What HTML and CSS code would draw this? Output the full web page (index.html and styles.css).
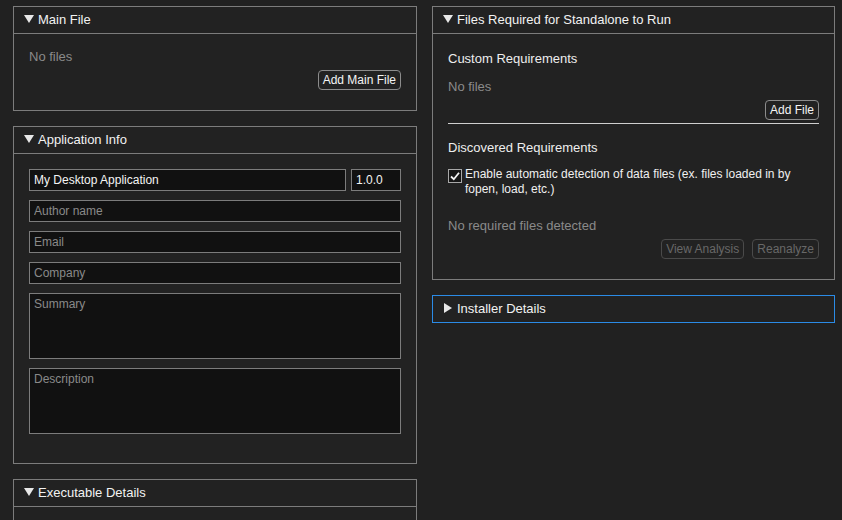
FILE: index.html
```html
<!DOCTYPE html>
<html>
<head>
<meta charset="utf-8">
<link rel="stylesheet" href="styles.css">
</head>
<body>
<div class="page">
  <div class="col">
    <section class="panel">
      <header class="panel-head">
        <svg class="tri" width="10" height="8" viewBox="0 0 10 8"><polygon points="0,0 10,0 5,8" fill="#e8e8e8"/></svg>
        <span>Main File</span>
      </header>
      <div class="panel-body main-body">
        <div class="muted">No files</div>
        <div class="btn-row"><button class="btn">Add Main File</button></div>
      </div>
    </section>

    <section class="panel">
      <header class="panel-head">
        <svg class="tri" width="10" height="8" viewBox="0 0 10 8"><polygon points="0,0 10,0 5,8" fill="#e8e8e8"/></svg>
        <span>Application Info</span>
      </header>
      <div class="panel-body info-body">
        <div class="name-row">
          <input class="field name" value="My Desktop Application">
          <input class="field ver" value="1.0.0">
        </div>
        <input class="field" placeholder="Author name">
        <input class="field" placeholder="Email">
        <input class="field" placeholder="Company">
        <textarea class="field area" placeholder="Summary"></textarea>
        <textarea class="field area" placeholder="Description"></textarea>
      </div>
    </section>

    <section class="panel">
      <header class="panel-head">
        <svg class="tri" width="10" height="8" viewBox="0 0 10 8"><polygon points="0,0 10,0 5,8" fill="#e8e8e8"/></svg>
        <span>Executable Details</span>
      </header>
      <div class="panel-body exe-body"></div>
    </section>
  </div>

  <div class="col">
    <section class="panel">
      <header class="panel-head">
        <svg class="tri" width="10" height="8" viewBox="0 0 10 8"><polygon points="0,0 10,0 5,8" fill="#e8e8e8"/></svg>
        <span>Files Required for Standalone to Run</span>
      </header>
      <div class="panel-body req-body">
        <div class="sub-title">Custom Requirements</div>
        <div class="muted req-none">No files</div>
        <div class="btn-row"><button class="btn">Add File</button></div>
        <div class="rule"></div>
        <div class="sub-title disc">Discovered Requirements</div>
        <label class="check-row">
          <span class="checkbox">
            <svg width="12" height="12" viewBox="0 0 12 12"><polyline points="2,6.5 4.8,9.2 10,2.8" fill="none" stroke="#f2f2f2" stroke-width="1.8"/></svg>
          </span>
          <span class="check-text">Enable automatic detection of data files (ex. files loaded in by fopen, load, etc.)</span>
        </label>
        <div class="muted detected">No required files detected</div>
        <div class="btn-row gap">
          <button class="btn disabled">View Analysis</button>
          <button class="btn disabled">Reanalyze</button>
        </div>
      </div>
    </section>

    <section class="panel focused">
      <header class="panel-head closed">
        <svg class="tri" width="8" height="10" viewBox="0 0 8 10"><polygon points="0,0 8,5 0,10" fill="#e8e8e8"/></svg>
        <span>Installer Details</span>
      </header>
    </section>
  </div>
</div>
</body>
</html>
```
FILE: styles.css
```css
html, body {
  margin: 0;
  padding: 0;
  height: 520px;
  overflow: hidden;
  background: #212121;
}
body {
  font-family: "Liberation Sans", Arial, sans-serif;
  color: #f0f0f0;
}
.page {
  display: grid;
  grid-template-columns: 404px 403px;
  column-gap: 15px;
  padding: 6px 0 0 13px;
  align-items: start;
}
.col {
  display: flex;
  flex-direction: column;
  gap: 15px;
}
.panel {
  border: 1px solid #7c7c7c;
  background: #222222;
}
.panel.focused {
  border-color: #2b8be6;
}
.panel-head {
  box-sizing: border-box;
  height: 27px;
  padding-bottom: 2px;
  border-bottom: 1px solid #7c7c7c;
  display: flex;
  align-items: center;
  padding-left: 10px;
  font-size: 13px;
  color: #f2f2f2;
}
.panel-head.closed {
  border-bottom: none;
  height: 26px;
  padding-left: 11px;
}
.panel-head .tri {
  margin-right: 4px;
  flex: none;
}
.panel-head.closed .tri {
  margin-right: 5px;
}
.panel-body {
  padding: 15px 15px 20px 15px;
}
.muted {
  font-size: 13px;
  color: #8a8a8a;
  line-height: 15px;
}
.main-body {
  padding-top: 16px;
}
.main-body .muted,
.req-none {
  line-height: 14px;
}
.btn-row {
  display: flex;
  justify-content: flex-end;
  margin-top: 6px;
}
.btn-row.gap {
  gap: 8px;
}
.btn {
  height: 20px;
  padding: 0 4px;
  border: 1px solid #8c8c8c;
  border-radius: 4px;
  background: #222222;
  color: #f4f4f4;
  font-family: "Liberation Sans", Arial, sans-serif;
  font-size: 12px;
  line-height: 18px;
}
.btn.disabled {
  border-color: #4a4a4a;
  color: #686868;
}
.info-body {
  display: flex;
  flex-direction: column;
  gap: 9px;
  padding-bottom: 29px;
}
.name-row {
  display: flex;
  gap: 5px;
}
.field {
  box-sizing: border-box;
  height: 22px;
  margin: 0;
  border: 1px solid #7c7c7c;
  background: #111111;
  color: #f4f4f4;
  font-family: "Liberation Sans", Arial, sans-serif;
  font-size: 12px;
  padding: 0 4px;
  outline: none;
  width: 100%;
}
.field::placeholder {
  color: #8a8a8a;
}
.field.name {
  flex: 1;
  width: auto;
  min-width: 0;
}
.field.ver {
  flex: none;
  width: 50px;
}
.field.area {
  height: 66px;
  resize: none;
  padding: 3px 4px;
  line-height: 14px;
  overflow: hidden;
  display: block;
}
.exe-body {
  height: 40px;
}
.req-body {
  padding-top: 17px;
}
.sub-title {
  font-size: 13px;
  line-height: 16px;
  color: #eeeeee;
}
.req-none {
  margin-top: 13px;
}
.rule {
  height: 1px;
  background: #cfcfcf;
  margin-top: 3px;
}
.sub-title.disc {
  margin-top: 16px;
}
.check-row {
  display: flex;
  align-items: flex-start;
  margin-top: 11px;
  gap: 3px;
}
.checkbox {
  flex: none;
  box-sizing: border-box;
  width: 14px;
  height: 14px;
  margin-top: 2px;
  border: 1px solid #a8a8a8;
  background: #151515;
  display: flex;
  align-items: center;
  justify-content: center;
}
.check-text {
  font-size: 12px;
  line-height: 15px;
  color: #f0f0f0;
}
.detected {
  margin-top: 21px;
}
.req-body .btn-row.gap {
  margin-top: 6px;
}
```
